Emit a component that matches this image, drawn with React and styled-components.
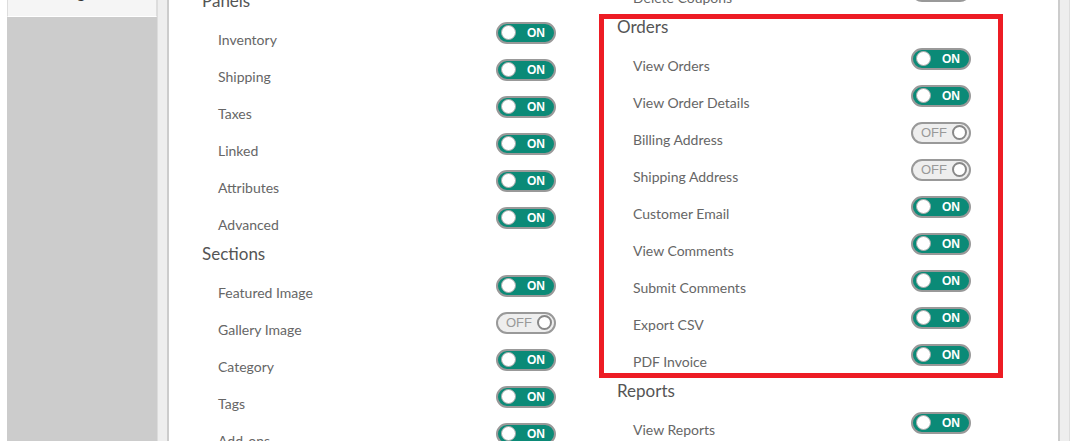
import React from "react";
import styled, { createGlobalStyle } from "styled-components";

const GlobalStyle = createGlobalStyle`
  html, body {
    margin: 0;
    padding: 0;
    background: #fff;
    overflow: hidden;
  }
  body {
    font-family: "Lato", "Liberation Sans", sans-serif;
  }
`;

const leftSections = [
  {
    title: "Panels",
    items: [
      ["Inventory", true],
      ["Shipping", true],
      ["Taxes", true],
      ["Linked", true],
      ["Attributes", true],
      ["Advanced", true],
    ],
  },
  {
    title: "Sections",
    items: [
      ["Featured Image", true],
      ["Gallery Image", false],
      ["Category", true],
      ["Tags", true],
      ["Add-ons", true],
    ],
  },
];

const rightSections = [
  {
    title: null,
    items: [["Delete Coupons", true]],
  },
  {
    title: "Orders",
    highlight: true,
    items: [
      ["View Orders", true],
      ["View Order Details", true],
      ["Billing Address", false],
      ["Shipping Address", false],
      ["Customer Email", true],
      ["View Comments", true],
      ["Submit Comments", true],
      ["Export CSV", true],
      ["PDF Invoice", true],
    ],
  },
  {
    title: "Reports",
    items: [["View Reports", true]],
  },
];

function Toggle({ on }) {
  return (
    <Switch $on={on}>
      <Knob $on={on} />
      <SwitchText $on={on}>{on ? "ON" : "OFF"}</SwitchText>
    </Switch>
  );
}

function Section({ section }) {
  const body = (
    <>
      {section.title && <Heading>{section.title}</Heading>}
      {section.items.map(([label, on]) => (
        <Row key={label}>
          <Label>{label}</Label>
          <Toggle on={on} />
        </Row>
      ))}
    </>
  );
  if (section.highlight) return <Highlight>{body}</Highlight>;
  return body;
}

export default function App() {
  return (
    <>
      <GlobalStyle />
      <Page>
        <Sidebar>
          <Tab>Settings</Tab>
        </Sidebar>
        <Main>
          <Panel>
            <Column $offset={11}>
              {leftSections.map((s) => (
                <Section key={s.title} section={s} />
              ))}
            </Column>
            <Column $offset={0}>
              {rightSections.map((s, i) => (
                <Section key={i} section={s} />
              ))}
            </Column>
          </Panel>
        </Main>
      </Page>
    </>
  );
}

const Page = styled.div`
  display: flex;
  width: 1063px;
  height: 480px;
  margin-top: -26px;
  padding-left: 7px;
`;

const Sidebar = styled.div`
  width: 150px;
  background: #cccccc;
  border-right: 1px solid #dcdcdc;
  flex-shrink: 0;
`;

const Tab = styled.div`
  height: 43px;
  box-sizing: border-box;
  background: #f5f5f5;
  border-left: 1px solid #dddddd;
  border-right: 1px solid #dddddd;
  border-bottom: 1px solid #ffffff;
  padding-left: 33px;
  font-size: 14px;
  font-weight: 700;
  line-height: 40px;
  color: #333;
  overflow: hidden;
`;

const Main = styled.div`
  flex: 1;
  display: flex;
  background: #eeeeee;
  padding: 0 9px;
  border-right: 1px solid #dddddd;
`;

const Panel = styled.div`
  flex: 1;
  display: grid;
  grid-template-columns: 415px 415px;
  align-content: start;
  background: #fff;
  border-left: 2px solid #cccccc;
  border-right: 2px solid #cccccc;
  padding-left: 33px;
`;

const Column = styled.div`
  display: flex;
  flex-direction: column;
  padding-top: ${(p) => p.$offset}px;
`;

const Highlight = styled.div`
  position: relative;
  display: flex;
  flex-direction: column;

  &::after {
    content: "";
    position: absolute;
    left: -18px;
    top: 3px;
    width: 404px;
    height: 364px;
    box-sizing: border-box;
    border: 5px solid #ed1c24;
    pointer-events: none;
  }
`;

const Heading = styled.div`
  height: 31px;
  box-sizing: border-box;
  padding-top: 5px;
  font-size: 17px;
  line-height: 22px;
  color: #555;
`;

const Row = styled.div`
  width: 354px;
  height: 37px;
  box-sizing: border-box;
  padding-left: 16px;
  display: flex;
  justify-content: space-between;
  align-items: flex-start;
`;

const Label = styled.div`
  margin-top: 14px;
  font-size: 14px;
  line-height: 20px;
  color: #666;
`;

const Switch = styled.div`
  position: relative;
  margin-top: 6px;
  width: 60px;
  height: 22px;
  box-sizing: border-box;
  border-radius: 11px;
  border: 2px solid #999;
  background: ${(p) => (p.$on ? "#0b8a77" : "#eeeeee")};
`;

const Knob = styled.span`
  position: absolute;
  top: 1px;
  ${(p) => (p.$on ? "left: 3px;" : "right: 2px;")}
  width: 15px;
  height: 15px;
  margin-top: -0.5px;
  box-sizing: border-box;
  border-radius: 50%;
  background: #fff;
  border: ${(p) => (p.$on ? "1px solid #aaa" : "2px solid #888")};
`;

const SwitchText = styled.span`
  position: absolute;
  top: 0;
  ${(p) => (p.$on ? "right: 9px;" : "left: 8px;")}
  font-family: "Liberation Sans", Arial, sans-serif;
  font-size: ${(p) => (p.$on ? 12 : 13)}px;
  line-height: 18px;
  font-weight: ${(p) => (p.$on ? 700 : 400)};
  color: ${(p) => (p.$on ? "#fff" : "#999")};
`;
